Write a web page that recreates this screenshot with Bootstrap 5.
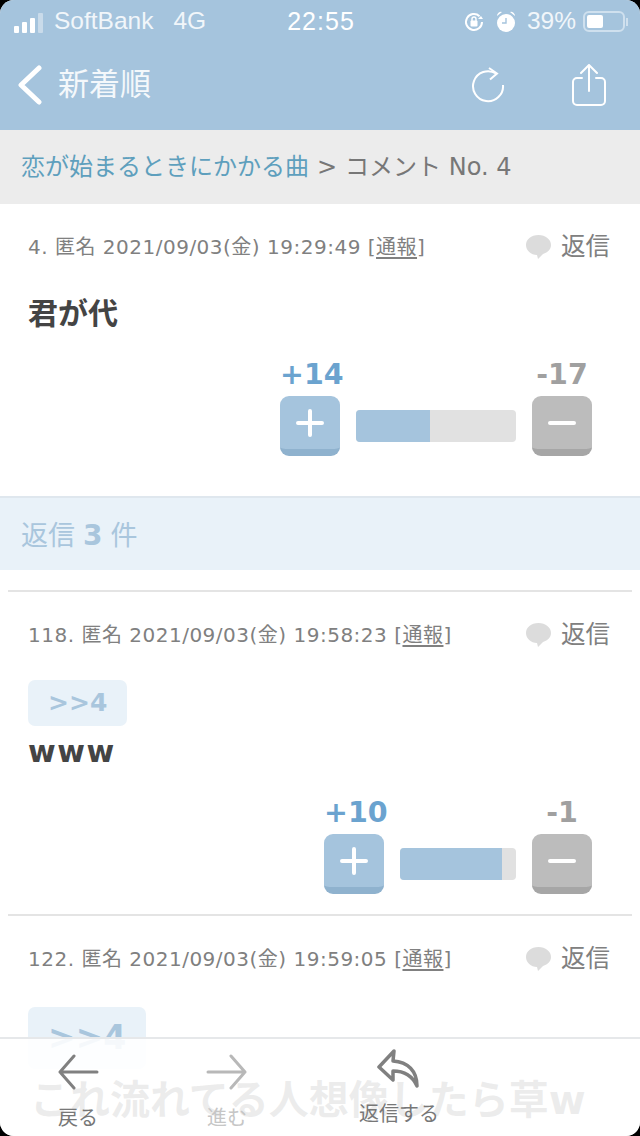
<!DOCTYPE html>
<html lang="ja">
<head>
    <meta charset="UTF-8">
    <meta name="viewport" content="width=device-width, initial-scale=1.0">
    <title>コメント No. 4</title>
    <link href="https://cdn.jsdelivr.net/npm/bootstrap@5.3.0/dist/css/bootstrap.min.css" rel="stylesheet">
    <style>
        html, body { background: #000; margin: 0; }
        body { font-family: "DejaVu Sans", "Noto Sans CJK JP", sans-serif; color: #444; }
        .phone { width: 640px; height: 1136px; background: #fff; border-radius: 14px; overflow: hidden; position: relative; }
        .top-area { background: #a5c4dd; height: 130px; color: #fff; }
        .status-row { height: 43px; padding: 0 12px 0 14px; }
        .signal { gap: 3px; width: 32px; height: 22px; }
        .signal i { display: block; width: 5px; background: #fff; border-radius: 1px; }
        .left-part, .right-part { width: 260px; }
        .clock { font-size: 25px; font-weight: 500; font-family: "Liberation Sans", sans-serif; letter-spacing: 1px; }
        .status-text { font-family: "Liberation Sans", sans-serif; font-size: 24.500px; color: #f1f6fa; }
        .carrier-type { margin-left: 20px; }
        .alarm-icon { margin-left: 10px; }
        .batt-pct { margin: 0 7px 0 10px; }
        .batt { width: 42px; height: 21px; border: 2px solid #cfe0ee; border-radius: 6px; padding: 2px; flex: none; }
        .batt i { display: block; width: 16px; height: 100%; background: #fff; border-radius: 2px; }
        .batt-nub { width: 2px; height: 8px; background: #cfe0ee; margin-left: 1px; flex: none; }
        .title-row { height: 87px; padding: 0 33px 4px 16px; }
        .title-text { font-size: 31px; margin-left: 14px; color: #f4f8fb; }
        .crumbs { height: 74px; background: #ececec; padding: 0 21px; font-size: 24px; color: #777; }
        .crumbs span.lnk { color: #5e9fbd; }
        .entry { padding: 0 28px; }
        .entry-head { font-size: 20px; letter-spacing: .5px; color: #808080; height: 84px; padding-top: 2px; }
        .entry-head u { text-underline-offset: 3px; }
        .reply-lnk { font-size: 24.500px; letter-spacing: 0; color: #808080; margin-right: 2px; gap: 9px; }
        .body-text { font-size: 30px; font-weight: 700; color: #444; line-height: 36px; }
        .wide-text { letter-spacing: 1.500px; }
        .vote-num { font-size: 28.500px; font-weight: 700; line-height: 32px; white-space: nowrap; }
        .plus-col { color: #6ba3cf; }
        .minus-col { color: #a0a0a0; }
        .vote-btn { width: 60px; height: 60px; border-radius: 9px; border: 0; padding: 0; border-bottom: 7px solid; display: flex; align-items: center; justify-content: center; }
        .btn-up { background: #a5c4dd; border-color: #8fb2ce; }
        .btn-down { background: #bcbcbc; border-color: #a6a6a6; }
        .meter { height: 32px; background: #e1e1e1; border-radius: 4px; overflow: hidden; margin-bottom: 14px; }
        .meter i { display: block; height: 100%; background: #a5c4dd; }
        .vote-box { gap: 16px; margin-right: 20px; }
        .vote-item { width: 60px; }
        .vote-item .vote-btn { margin-top: 5px; }
        .reply-band { height: 74px; background: #e9f2f9; border-top: 2px solid #dfe7ee; color: #a9c6dd; font-size: 27px; padding: 4px 21px 0; margin-bottom: 20px; }
        .reply-band b { font-size: 28px; margin: 0 8px; }
        .rule { border-top: 2px solid #e4e4e4; margin: 0 8px; }
        .quote-tag { display: inline-block; background: #e9f2f9; color: #a9c6dd; border-radius: 7px; font-weight: 700; font-size: 25px; line-height: 46px; padding: 0 20px; }
        .ghost-tag { font-size: 33px; line-height: 62px; padding: 0 20px; }
        .bottom-bar { position: absolute; left: 0; right: 0; bottom: 0; height: 99px; border-top: 2px solid #e6e8ea; background: rgba(255,255,255,.88); }
        .under-text { position: absolute; left: 30px; top: 1076px; font-size: 40px; font-weight: 700; color: #666; white-space: nowrap; line-height: 48px; }
        .tool { position: absolute; top: 0; text-align: center; font-size: 20px; color: #777; width: 100px; }
        .tool svg { display: block; margin: 0 auto; }
        .tool-off { color: #c6c6c6; }
    </style>
</head>
<body>
<div class="phone">
    <div class="top-area">
        <div class="status-row d-flex align-items-center justify-content-between">
            <div class="left-part d-flex align-items-center status-text">
                <div class="signal d-flex align-items-end me-2">
                    <i style="height:7px"></i><i style="height:11px"></i><i style="height:15px"></i><i style="height:20px;opacity:.4"></i>
                </div>
                <span>SoftBank</span><span class="carrier-type">4G</span>
            </div>
            <div class="clock">22:55</div>
            <div class="right-part d-flex align-items-center justify-content-end status-text">
                <svg width="22" height="22" viewBox="0 0 22 22" fill="none" stroke="#fff" stroke-width="2"><path d="M19 11a8 8 0 1 1-2.500-5.800"/><path d="M20 8h-5l3-3z" fill="#fff" stroke="none"/><rect x="7.500" y="9.500" width="7" height="6" rx="1" fill="#fff" stroke="none"/><path d="M9 10V8a2 2 0 0 1 4 0v2" stroke-width="1.400"/></svg>
                <svg class="alarm-icon" width="22" height="24" viewBox="0 0 22 24"><circle cx="11" cy="13" r="9" fill="#fff"/><path d="M2 6a4 4 0 0 1 5-4zM20 6a4 4 0 0 0-5-4z" fill="#fff"/><path d="M11 8v5H7" stroke="#a5c4dd" stroke-width="1.400" fill="none"/></svg>
                <span class="batt-pct">39%</span>
                <div class="batt"><i></i></div><div class="batt-nub"></div>
            </div>
        </div>
        <div class="title-row d-flex align-items-center">
            <svg width="28" height="40" viewBox="0 0 28 40" fill="none" stroke="#fff" stroke-width="5" stroke-linecap="round" stroke-linejoin="round"><path d="M23 3 5 20l18 17"/></svg>
            <span class="title-text">新着順</span>
            <svg class="ms-auto" width="36" height="36" viewBox="0 0 36 36" fill="none" stroke="#fff" stroke-width="2"><path d="M26 6.500A15 15 0 1 0 33 18"/><path d="M19 1l8 5.500-7 6"/></svg>
            <svg style="margin-left:65px" width="36" height="42" viewBox="0 0 36 42" fill="none" stroke="#fff" stroke-width="2" stroke-linecap="round" stroke-linejoin="round"><path d="M11 14H6a4 4 0 0 0-4 4v19a4 4 0 0 0 4 4h24a4 4 0 0 0 4-4V18a4 4 0 0 0-4-4h-5"/><path d="M18 27V2M10 9l8-8 8 8"/></svg>
        </div>
    </div>

    <div class="crumbs d-flex align-items-center">
        <span class="lnk">恋が始まるときにかかる曲</span><span class="mx-2">&gt;</span><span>コメント No. 4</span>
    </div>

    <div class="entry" style="height:292px">
        <div class="entry-head d-flex align-items-center justify-content-between">
            <span>4. 匿名 2021/09/03(金) 19:29:49 [<u>通報</u>]</span>
            <span class="reply-lnk d-flex align-items-center">
                <svg width="27" height="26" viewBox="0 0 27 26"><path d="M13.500 1C6 1 1 5.500 1 11s5 10 11 10l1 4 5-5c5-1.500 8-5 8-9 0-5.500-5.500-10-12.500-10z" fill="#dcdcdc"/></svg>返信
            </span>
        </div>
        <div class="body-text" style="margin-top:8px">君が代</div>
        <div class="d-flex justify-content-end vote-box align-items-end" style="margin-top:27px">
            <div class="vote-item text-center">
                <div class="vote-num plus-col">+14</div>
                <button class="vote-btn btn-up" type="button"><svg width="30" height="30" viewBox="0 0 30 30" stroke="#fff" stroke-width="4" stroke-linecap="round"><path d="M15 3v24M3 15h24"/></svg></button>
            </div>
            <div class="meter" style="width:160px"><i style="width:46%"></i></div>
            <div class="vote-item text-center">
                <div class="vote-num minus-col">-17</div>
                <button class="vote-btn btn-down" type="button"><svg width="30" height="30" viewBox="0 0 30 30" stroke="#fff" stroke-width="4" stroke-linecap="round"><path d="M3 15h24"/></svg></button>
            </div>
        </div>
    </div>

    <div class="reply-band d-flex align-items-center"><span>返信<b>3</b>件</span></div>
    <div class="rule"></div>

    <div class="entry" style="height:322px">
        <div class="entry-head d-flex align-items-center justify-content-between">
            <span>118. 匿名 2021/09/03(金) 19:58:23 [<u>通報</u>]</span>
            <span class="reply-lnk d-flex align-items-center">
                <svg width="27" height="26" viewBox="0 0 27 26"><path d="M13.500 1C6 1 1 5.500 1 11s5 10 11 10l1 4 5-5c5-1.500 8-5 8-9 0-5.500-5.500-10-12.500-10z" fill="#dcdcdc"/></svg>返信
            </span>
        </div>
        <div style="margin-top:4px"><span class="quote-tag">&gt;&gt;4</span></div>
        <div class="body-text wide-text" style="margin-top:8px">www</div>
        <div class="d-flex justify-content-end vote-box align-items-end" style="margin-top:27px">
            <div class="vote-item text-center">
                <div class="vote-num plus-col">+10</div>
                <button class="vote-btn btn-up" type="button"><svg width="30" height="30" viewBox="0 0 30 30" stroke="#fff" stroke-width="4" stroke-linecap="round"><path d="M15 3v24M3 15h24"/></svg></button>
            </div>
            <div class="meter" style="width:116px"><i style="width:88%"></i></div>
            <div class="vote-item text-center">
                <div class="vote-num minus-col">-1</div>
                <button class="vote-btn btn-down" type="button"><svg width="30" height="30" viewBox="0 0 30 30" stroke="#fff" stroke-width="4" stroke-linecap="round"><path d="M3 15h24"/></svg></button>
            </div>
        </div>
    </div>
    <div class="rule"></div>

    <div class="entry">
        <div class="entry-head d-flex align-items-center justify-content-between">
            <span>122. 匿名 2021/09/03(金) 19:59:05 [<u>通報</u>]</span>
            <span class="reply-lnk d-flex align-items-center">
                <svg width="27" height="26" viewBox="0 0 27 26"><path d="M13.500 1C6 1 1 5.500 1 11s5 10 11 10l1 4 5-5c5-1.500 8-5 8-9 0-5.500-5.500-10-12.500-10z" fill="#dcdcdc"/></svg>返信
            </span>
        </div>
        <div style="margin-top:7px"><span class="quote-tag ghost-tag">&gt;&gt;4</span></div>
    </div>
    <div class="under-text">これ流れてる人想像したら草w</div>

    <div class="bottom-bar">
        <div class="tool" style="left:28px">
            <svg style="margin-top:15px" width="42" height="36" viewBox="0 0 42 36" fill="none" stroke="#808080" stroke-width="3" stroke-linecap="round" stroke-linejoin="round"><path d="M40 18H3M17 2 3 18l14 16"/></svg>
            <div style="margin-top:13px">戻る</div>
        </div>
        <div class="tool tool-off" style="left:177px">
            <svg style="margin-top:15px" width="42" height="36" viewBox="0 0 42 36" fill="none" stroke="#b8b8b8" stroke-width="3" stroke-linecap="round" stroke-linejoin="round"><path d="M2 18h37M25 2l14 16-14 16"/></svg>
            <div style="margin-top:13px">進む</div>
        </div>
        <div class="tool" style="left:349px">
            <svg style="margin-top:10px" width="44" height="40" viewBox="0 0 44 40" fill="none" stroke="#808080" stroke-width="3.500" stroke-linecap="round" stroke-linejoin="round"><path d="M17 2 2 18l14 13v-9c11 0 19 4 24 15 0-15-9-24-24-25z"/></svg>
            <div style="margin-top:10px">返信する</div>
        </div>
    </div>
</div>
<script src="https://cdn.jsdelivr.net/npm/bootstrap@5.3.0/dist/js/bootstrap.bundle.min.js"></script>
</body>
</html>
